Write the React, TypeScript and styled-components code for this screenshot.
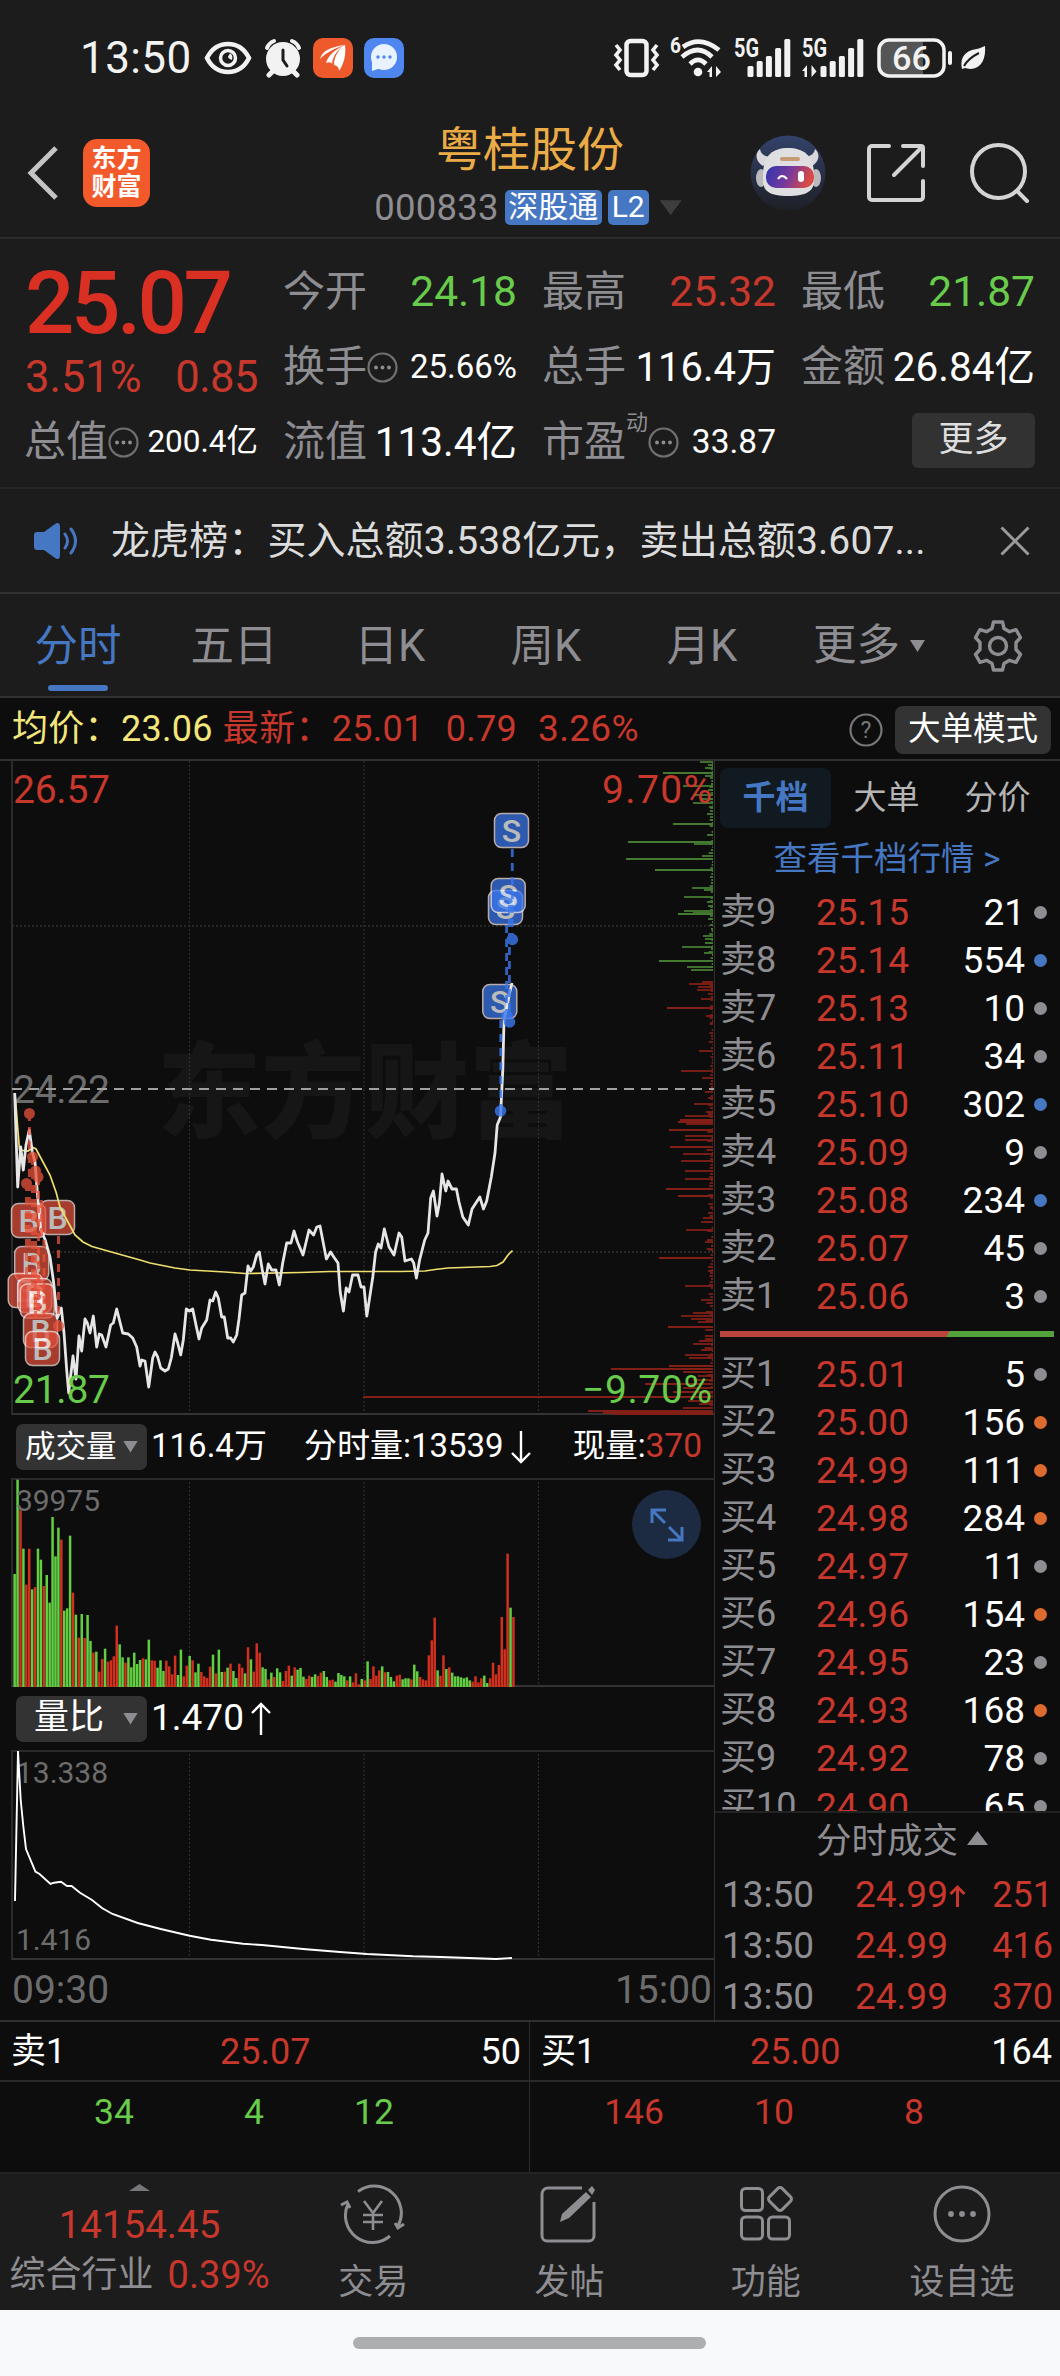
import React from 'react';
import styled, { createGlobalStyle } from 'styled-components';

const c = {
  red: '#c8372b',
  brightRed: '#d93023',
  green: '#68cb4b',
  blue: '#4677c2',
  orange: '#dd6a2e',
  grey: '#8d8d92',
  dim: '#6c6c6c',
  white: '#ffffff',
  line: '#2c2c2c',
  panel: '#1c1c1c',
  dark: '#0d0d0d',
};

const GlobalStyle = createGlobalStyle`
  * { box-sizing: border-box; }
  body {
    margin: 0;
    background: ${c.dark};
    font-family: Roboto, 'Noto Sans CJK SC', sans-serif;
    color: ${c.white};
  }
  svg { display: block; flex: none; }
`;

/* ---------- data ---------- */

// minute volume, negative = falling minute
const VOLUME = [
  -339, -622, 530, -415, 307, 415, -293, 300, -415, -382, 303, -336, -253, -510, -392, -478, 442,
  -229, -236, -454, 283, -217, 148, -219, 147, -216, -138, 103, -106, 46, 84, -115, 76, 80, 92, 184,
  -128, -89, 73, -89, -59, -103, -69, -81, 86, -83, -142, 80, 79, -58, -80, -48, 79, 62, 38, 94, -36,
  -112, 32, 64, -93, 80, -44, -70, 45, 32, 27, 61, -97, 41, -112, -45, 46, -58, 70, -48, -27, 70, 58,
  -41, 119, -83, 46, 131, 103, -59, -54, 23, -43, 30, -56, -44, 18, 48, 64, -34, 59, -52, -57, -31, 24,
  34, -30, -38, 33, 43, -48, -30, 20, 22, -16, -42, -36, -32, 20, -32, 14, 41, 8, -24, 20, -77, 24, 62,
  34, 50, -62, 44, -45, -30, -17, 34, 37, -23, -26, -26, 23, -67, -47, 30, 23, 20, 95, 140, 208, -50,
  34, 95, -54, 59, -43, -32, -32, -29, -26, -29, -20, 16, 32, 14, 26, -34, -12, 26, 73, 38, 66, 210,
  113, 400, -238, 210,
];

const PRICE_LINE =
  '14.7,1093 17.7,1187 20.7,1147 23.3,1170 26,1145 29.3,1130 32.3,1152 35,1162 37.7,1197 40.7,1230 45.3,1240 50,1257 53.3,1280 57.3,1318 61.3,1308 64,1333 66.7,1370 68.7,1393 73,1356 76,1379 79,1336 81.7,1351 85,1319 87.3,1323 90,1333 93.3,1316 96.7,1347 99.3,1334 101.7,1335 106,1347 110.7,1325 113.3,1323 116.7,1309 122.7,1333 128.3,1334 132.7,1338 136.7,1347 140,1366 141.7,1360 145,1361 148.7,1387 152.7,1358 155,1352 157.7,1357 160.7,1368 165,1371 168.3,1369 171.3,1358 175,1334 177.7,1343 180.7,1355 183.3,1340 186.3,1309 189.3,1311 192.7,1309 196,1325 199,1339 201.7,1328 206.7,1320 210,1300 212.7,1301 215.7,1292 218.3,1298 221.7,1317 224.3,1317 227.7,1338 230.7,1338 233.3,1342 236.7,1335 239,1319 241.7,1295 245,1293 248,1266 250.7,1271 253.3,1267 256.7,1255 259.3,1252 262.3,1270 265,1284 268.3,1264 271.7,1270 276,1270 279.3,1285 282.7,1263 286.7,1243 291,1243 294,1231 297.5,1242 303,1255 309,1230 313.6,1235 316.8,1227 320,1226 326.4,1259 330.6,1252 333.8,1257 338,1263 340.2,1292 343.4,1311 346.2,1288 349,1292 352.6,1275 358,1275 361,1287 364,1287 366.8,1316 372.8,1277 375.6,1252 378.3,1244 381,1248 384.3,1229 389,1247 394,1255 399,1233 401.7,1237 405,1261 411.4,1259 413.7,1263 416.4,1278 419.6,1260 424.7,1240 428,1233 430.7,1198 433.4,1191 437,1216 439.4,1203 442,1174 445.8,1191 448,1181 452,1189 456.4,1189 459,1202 462.8,1217 468.3,1225 472,1209 479.8,1197 483.5,1209 486.7,1201 491.3,1177 495,1153 497.2,1125 500.5,1117 502.8,1070 504,1020 507.3,1005 509.6,993 512,983';

const AVG_LINE =
  '15,1093 17.5,1125 19.5,1150 28,1151 33,1147.5 36,1149 50,1175 56,1192 60,1207 68,1222 75,1235 83,1242 92,1246.5 115,1253 140,1260 150,1263 175,1268 190,1270 225,1272 245,1273.5 300,1272.5 330,1271.5 400,1271.5 425,1271 435,1269.5 448,1268 490,1266.5 497,1265.5 503,1262 508,1255 512.5,1250.5';

const RATIO_LINE =
  '15,1901 18,1751 20.7,1800 23.4,1827 26,1849 35.4,1871.5 39.5,1874 50.5,1884 54,1882.7 61,1881.7 67,1886 71.6,1886 80,1892.7 92,1900 102,1908 112.5,1914 137.7,1923 160.7,1929 189.6,1935.7 211,1939.7 243,1943.7 262,1945 303,1949 340,1952 367,1954 413,1956.3 441,1957 496,1959 512,1958';

const DEPTH_GREEN = [
  [762, 13], [765, 5], [768, 8], [773, 50], [776, 8], [786, 30], [790, 5], [795, 20], [799, 12],
  [803, 20], [807, 4], [814, 6], [820, 2], [824, 40], [835, 6], [842, 85], [844, 19], [856, 11],
  [859, 87], [870, 58], [888, 21], [890, 9], [897, 29], [902, 6], [906, 5], [911, 29], [913, 20],
  [914, 35], [919, 5], [929, 2], [936, 10], [939, 8], [943, 8], [947, 31], [953, 9], [961, 54],
  [967, 26], [970, 22],
];

const DEPTH_RED = [
  [982, 11], [984, 24], [987, 15], [990, 16], [994, 5], [999, 12], [1008, 46], [1016, 7], [1023, 3],
  [1036, 2], [1051, 14], [1071, 32], [1078, 11], [1092, 8], [1098, 5], [1104, 19], [1112, 7],
  [1116, 28], [1120, 33], [1122, 35], [1124, 27], [1130, 44], [1136, 28], [1140, 28], [1147, 43],
  [1154, 30], [1161, 32], [1171, 28], [1179, 28], [1189, 47], [1196, 35], [1208, 3], [1218, 10],
  [1222, 12], [1230, 27], [1242, 8], [1250, 4], [1258, 54], [1267, 5], [1271, 5], [1286, 28],
  [1300, 12], [1313, 20], [1316, 32], [1319, 22], [1322, 15], [1327, 45], [1336, 8], [1341, 14],
  [1344, 20], [1350, 12], [1355, 28], [1358, 24], [1366, 44], [1369, 102], [1372, 30], [1376, 15],
  [1380, 20], [1384, 68], [1388, 30], [1392, 40], [1397, 350], [1401, 25], [1404, 14], [1408, 30],
  [1411, 125], [1413, 110], [1415, 100],
];

// small levels between the big ones
const NOISE = Array.from({ length: 215 }, (_, i) => {
  const y = 763 + i * 3;
  const grow = y > 1380 ? 9 : y > 1300 ? 5 : y > 1100 ? 3 : 1;
  return [y, ((i * 37) % 11) / 3 + ((i * 7) % 3 === 0 ? grow : 0)];
}).filter(([y]) => y < 972 || y > 981);

const BUY_TAGS = [
  [11.5, 1203.5], [14.7, 1246.5], [8.3, 1273.5], [17.7, 1278.5], [20.3, 1284], [23.5, 1313.5],
  [25.5, 1331.5], [40.5, 1200.5],
];
const SELL_TAGS = [[494.5, 813.5], [488.5, 890.5], [491.2, 878.5], [482.8, 984.5]];
const BUY_DOTS = [[29.4, 1113.5], [32.5, 1157], [35.5, 1171], [38, 1177], [26.5, 1183.5], [58.5, 1326]];
const SELL_DOTS = [[512.3, 939.5], [507, 1016], [509.5, 1022], [500.5, 1111]];
const BUY_DASHES = [
  [29.4, 1113, 1250], [32.5, 1157, 1285], [35.5, 1171, 1320], [38.5, 1177, 1318], [26.5, 1183, 1275],
  [41.5, 1200, 1240], [44, 1240, 1315], [58.5, 1236, 1326],
];
const SELL_DASHES = [[512.3, 849, 939], [506.6, 925, 1016], [509.4, 905, 1022], [500.8, 1020, 1111]];

type Level = [string, string, number, string];
const ASKS: Level[] = [
  ['卖9', '25.15', 21, c.grey],
  ['卖8', '25.14', 554, c.blue],
  ['卖7', '25.13', 10, c.grey],
  ['卖6', '25.11', 34, c.grey],
  ['卖5', '25.10', 302, c.blue],
  ['卖4', '25.09', 9, c.grey],
  ['卖3', '25.08', 234, c.blue],
  ['卖2', '25.07', 45, c.grey],
  ['卖1', '25.06', 3, c.grey],
];
const BIDS: Level[] = [
  ['买1', '25.01', 5, c.grey],
  ['买2', '25.00', 156, c.orange],
  ['买3', '24.99', 111, c.orange],
  ['买4', '24.98', 284, c.orange],
  ['买5', '24.97', 11, c.grey],
  ['买6', '24.96', 154, c.orange],
  ['买7', '24.95', 23, c.grey],
  ['买8', '24.93', 168, c.orange],
  ['买9', '24.92', 78, c.grey],
  ['买10', '24.90', 65, c.grey],
];

/* ---------- shared parts ---------- */

const Page = styled.div`
  width: 1060px;
  height: 2376px;
  overflow: hidden;
  display: flex;
  flex-direction: column;
`;

const Text = styled.span<{ $size: number; $color?: string; $weight?: number; $ls?: number }>`
  font-size: ${(p) => p.$size}px;
  line-height: 1.1;
  color: ${(p) => p.$color || c.white};
  font-weight: ${(p) => p.$weight || 400};
  letter-spacing: ${(p) => p.$ls || 0}px;
  white-space: nowrap;
`;

const Triangle = styled.i<{ $w: number; $h: number; $color: string; $up?: boolean }>`
  flex: none;
  width: ${(p) => p.$w}px;
  height: ${(p) => p.$h}px;
  background: ${(p) => p.$color};
  clip-path: ${(p) => (p.$up ? 'polygon(50% 0, 100% 100%, 0 100%)' : 'polygon(0 0, 100% 0, 50% 100%)')};
`;

/* ---------- status bar ---------- */

const StatusBar = styled.div`
  height: 115px;
  flex: none;
  background: ${c.panel};
  display: flex;
  justify-content: space-between;
  padding: 36px 74px 0 80px;
`;

const StatusGroup = styled.div<{ $gap: number }>`
  height: 44px;
  display: flex;
  align-items: center;
  gap: ${(p) => p.$gap}px;
`;

const AppTile = styled.div<{ $bg: string }>`
  width: 40px;
  height: 40px;
  border-radius: 10px;
  background: ${(p) => p.$bg};
  display: flex;
  align-items: center;
  justify-content: center;
`;

const Signal: React.FC<{ data?: boolean }> = ({ data }) => (
  <svg width={data ? 62 : 58} height="40" viewBox={data ? '0 0 62 40' : '0 0 58 40'} fill="#f2f2f2">
    <text x="0" y="19" fontSize="25" fontWeight="700" textLength="25" lengthAdjust="spacingAndGlyphs">
      5G
    </text>
    {[11, 16, 21, 29, 38].map((h, i) => (
      <rect key={h} x={(data ? 18.5 : 13.5) + i * 9.2} y={39 - h} width="6" height={h} rx="1.5" />
    ))}
    {data && <path d="M0 33l5-6v12H2.500v-6zM9.500 27l5 6.500-5 5.500z" />}
  </svg>
);

const StatusLine = () => (
  <StatusBar>
    <StatusGroup $gap={11}>
      <Text $size={44} $color="#f2f2f2" $ls={0.4}>13:50</Text>
      <svg width="50" height="36" viewBox="0 0 50 36" fill="none" stroke="#f2f2f2">
        <path d="M4 18C9 8 17 4 25 4S41 8 46 18C41 28 33 32 25 32S9 28 4 18z" strokeWidth="4.500" />
        <circle cx="25" cy="18" r="7.500" strokeWidth="3.500" />
        <path d="M26 15a3 3 0 0 1 1 4" strokeWidth="4" />
      </svg>
      <svg width="38" height="40" viewBox="0 0 38 40">
        <circle cx="19" cy="21" r="17" fill="#f2f2f2" />
        <path d="M3 10A12 12 0 0 1 10 3M28 3a12 12 0 0 1 7 7" stroke="#f2f2f2" strokeWidth="4" fill="none" strokeLinecap="round" />
        <path d="M8 34l-3 3M30 34l3 3" stroke="#f2f2f2" strokeWidth="5" strokeLinecap="round" />
        <path d="M19 12v10l4 6" stroke={c.panel} strokeWidth="3" fill="none" strokeLinecap="round" />
      </svg>
      <AppTile $bg="#ee5a2b">
        <svg width="28" height="28" viewBox="0 0 28 28" fill="#fff">
          <path d="M1 15C3 7 11 3 26 1 14 5 7 9 1 15zM7 19C9 12 15 6 26 1c-7 5-12 10-13 19 0-1-2-3-6-1zM15 21C15 13 19 6 26 1c1 8 0 17-6 26 0-3-1-5-5-6z" />
        </svg>
      </AppTile>
      <AppTile $bg="#4f86f0">
        <svg width="32" height="30" viewBox="0 0 32 30">
          <circle cx="16" cy="14" r="13" fill="#e9f2ff" />
          <path d="M4 18l0 10 9-3z" fill="#e9f2ff" />
          <circle cx="10" cy="14" r="1.700" fill="#4f86f0" />
          <circle cx="16" cy="14" r="1.700" fill="#4f86f0" />
          <circle cx="22" cy="14" r="1.700" fill="#4f86f0" />
        </svg>
      </AppTile>
    </StatusGroup>
    <StatusGroup $gap={10}>
      <svg width="47" height="40" viewBox="0 0 47 40" fill="none" stroke="#f2f2f2">
        <rect x="13.500" y="3" width="20" height="34" rx="4" strokeWidth="4.500" />
        <path d="M3 7l4 5-4 5 4 5-4 5 4 5M44 7l-4 5 4 5-4 5 4 5-4 5" strokeWidth="3.600" />
      </svg>
      <svg width="54" height="44" viewBox="0 -2 54 44" fill="none" stroke="#f2f2f2" strokeWidth="4.600">
        <text x="0" y="15" fontSize="22" fontWeight="700" fill="#f2f2f2" stroke="none" textLength="11" lengthAdjust="spacingAndGlyphs">
          6
        </text>
        <path d="M13 9Q30 -3 49 12M12 19Q28 5 42 19M20 26Q28 18 36 26" />
        <circle cx="28" cy="34" r="4.300" fill="#f2f2f2" stroke="none" />
        <path d="M37 34l5-6v11h-2.500v-5zM46 28l5 6-5 5z" fill="#f2f2f2" stroke="none" />
      </svg>
      <Signal />
      <Signal data />
      <svg width="78" height="40" viewBox="0 0 78 40">
        <path d="M14 2H49V38H14a8 8 0 0 1-8-8V10a8 8 0 0 1 8-8z" fill="#555" />
        <rect x="5" y="2" width="65" height="36" rx="10" fill="none" stroke="#f2f2f2" strokeWidth="3.500" />
        <text x="18" y="32" fontSize="34" fontWeight="500" fill="#f2f2f2" textLength="39" lengthAdjust="spacingAndGlyphs">
          66
        </text>
        <rect x="74" y="13" width="4" height="14" rx="2" fill="#f2f2f2" />
      </svg>
      <svg width="26" height="26" viewBox="0 0 26 26" style={{ marginLeft: -2 }}>
        <path d="M25 1c1 12-3 22-14 23-3 0-5-1-6-1l-3 1C0 15 3 8 12 5 17 4 21 3 25 1z" fill="#f2f2f2" />
        <path d="M4 21C8 14 13 11 19 8" stroke={c.panel} strokeWidth="2" fill="none" />
      </svg>
    </StatusGroup>
  </StatusBar>
);

/* ---------- title bar ---------- */

const TitleBar = styled.div`
  height: 124px;
  flex: none;
  background: ${c.panel};
  border-bottom: 2px solid ${c.line};
  display: grid;
  grid-template-columns: 330px 1fr 330px;
`;

const TitleSide = styled.div<{ $right?: boolean }>`
  display: flex;
  align-items: center;
  justify-content: ${(p) => (p.$right ? 'flex-end' : 'flex-start')};
  padding: ${(p) => (p.$right ? '0 30px 7px 0' : '0 0 7px 27px')};
`;

const BrandTile = styled.div`
  width: 67px;
  height: 68px;
  margin-left: 25px;
  border-radius: 14px;
  background: #f2592b;
  display: flex;
  flex-direction: column;
  align-items: center;
  justify-content: center;
  font-size: 25px;
  font-weight: 700;
  line-height: 28px;
`;

const TitleCenter = styled.div`
  display: flex;
  flex-direction: column;
  align-items: center;
  padding-top: 9px;
`;

const CodeRow = styled.div`
  display: flex;
  align-items: center;
  height: 36px;
  margin-top: 14px;
  margin-left: -4px;
`;

const Badge = styled.span<{ $w: number }>`
  width: ${(p) => p.$w}px;
  height: 35px;
  margin-left: 6px;
  border-radius: 5px;
  background: ${c.blue};
  font-size: 30px;
  line-height: 34px;
  text-align: center;
  white-space: nowrap;
`;

const Header = () => (
  <TitleBar>
    <TitleSide>
      <svg width="31" height="54" viewBox="0 0 31 54" fill="none" stroke="#c4c4c4" strokeWidth="5">
        <path d="M29 2L4 27l25 25" />
      </svg>
      <BrandTile>
        <span>东方</span>
        <span>财富</span>
      </BrandTile>
    </TitleSide>
    <TitleCenter>
      <Text $size={47} $color="#ebac48">粤桂股份</Text>
      <CodeRow>
        <Text $size={36.5} $color={c.grey} $ls={0.2}>000833</Text>
        <Badge $w={97}>深股通</Badge>
        <Badge $w={41}>L2</Badge>
        <Triangle $w={22} $h={15} $color="#3d3d3d" style={{ marginLeft: 11 }} />
      </CodeRow>
    </TitleCenter>
    <TitleSide $right>
      <svg width="76" height="76" viewBox="0 0 76 76">
        <defs>
          <linearGradient id="disc" x1="0" y1="0" x2="0" y2="1">
            <stop offset="0" stopColor="#33426a" />
            <stop offset="1" stopColor="#1e2026" />
          </linearGradient>
          <linearGradient id="visor" x1="0" y1="0" x2="1" y2="0.200">
            <stop offset="0" stopColor="#2f35b0" />
            <stop offset="0.550" stopColor="#7a3a9a" />
            <stop offset="1" stopColor="#dc4a45" />
          </linearGradient>
        </defs>
        <circle cx="38" cy="38" r="37.500" fill="url(#disc)" />
        <path d="M10 14c-5 4-5 12 3 17l10-9c-7 0-12-2-13-8zM65 14c5 4 5 12-3 17l-10-9c7 0 12-2 13-8z" fill="#d8d8dc" />
        <ellipse cx="11" cy="43" rx="5" ry="9" fill="#b9b9be" />
        <ellipse cx="66" cy="43" rx="5" ry="9" fill="#b9b9be" />
        <path d="M13 38C14 20 23 13 38 13s25 7 26 25v8c0 10-8 15-26 15s-25-5-25-15z" fill="#dfdfe2" />
        <rect x="16" y="31" width="48" height="22" rx="10" fill="url(#visor)" />
        <rect x="30" y="22" width="20" height="4" rx="2" fill="#c79a73" />
        <path d="M28 44q4-6 9 0" stroke="#fff" strokeWidth="2.200" fill="none" />
        <rect x="48" y="36" width="6" height="11" rx="3" fill="#fff" />
      </svg>
      <svg width="58" height="58" viewBox="0 0 58 58" fill="none" stroke="#d4d4d4" strokeWidth="4" strokeLinecap="round" style={{ marginLeft: 41 }}>
        <path d="M22 2H5a3 3 0 0 0-3 3v48a3 3 0 0 0 3 3h48a3 3 0 0 0 3-3V37M36 2h18a2 2 0 0 1 2 2v18M54 4L27 31" />
      </svg>
      <svg width="60" height="60" viewBox="0 0 60 60" fill="none" stroke="#d4d4d4" strokeWidth="4" strokeLinecap="round" style={{ marginLeft: 45 }}>
        <circle cx="28.500" cy="28.500" r="26.500" />
        <path d="M47 48l10 10" />
      </svg>
    </TitleSide>
  </TitleBar>
);

/* ---------- quote stats ---------- */

const Stats = styled.div`
  height: 250px;
  flex: none;
  background: ${c.panel};
  border-bottom: 2px solid #242424;
  display: grid;
  grid-template-columns: repeat(4, 233px);
  grid-template-rows: repeat(3, 75px);
  column-gap: 26px;
  padding: 16px 0 0 25px;
`;

const PriceBlock = styled.div`
  grid-row: span 2;
  display: flex;
  flex-direction: column;
`;

const Spread = styled.div`
  display: flex;
  align-items: center;
  justify-content: space-between;
`;

const Cell = styled(Spread)`
  position: relative;
`;

const LabelGroup = styled.div`
  display: flex;
  align-items: center;
`;

const Sup = styled.span`
  font-size: 22px;
  line-height: 24px;
  color: ${c.grey};
  align-self: flex-start;
  margin-top: -8px;
`;

const MoreButton = styled.div`
  width: 123px;
  height: 55px;
  margin: -5px 0 0 auto;
  border-radius: 6px;
  background: #323232;
  color: #dedede;
  font-size: 35px;
  line-height: 53px;
  text-align: center;
`;

const InfoDots = () => (
  <svg width="31" height="31" viewBox="0 0 31 31">
    <circle cx="15.500" cy="15.500" r="14" fill="none" stroke="#707074" strokeWidth="2.200" />
    <circle cx="9" cy="15.500" r="1.900" fill="#8d8d92" />
    <circle cx="15.500" cy="15.500" r="1.900" fill="#8d8d92" />
    <circle cx="22" cy="15.500" r="1.900" fill="#8d8d92" />
  </svg>
);

interface StatProps {
  label: string;
  value: string;
  size?: number;
  color?: string;
  dots?: boolean;
  sup?: string;
}

const Stat: React.FC<StatProps> = ({ label, value, size = 42.5, color, dots, sup }) => (
  <Cell>
    <LabelGroup>
      <Text $size={42} $color={c.grey} style={{ marginLeft: -1 }}>{label}</Text>
      {sup && <Sup>{sup}</Sup>}
      {dots && <InfoDots />}
    </LabelGroup>
    <Text $size={size} $color={color}>{value}</Text>
  </Cell>
);

const Quote = () => (
  <Stats>
    <PriceBlock>
      <Text $size={87} $color={c.brightRed} $weight={500} $ls={-3.5} style={{ marginTop: 1 }}>25.07</Text>
      <Spread style={{ marginTop: 2 }}>
        <Text $size={43.5} $color={c.red}>3.51%</Text>
        <Text $size={43.5} $color={c.red} $ls={-0.5}>0.85</Text>
      </Spread>
    </PriceBlock>
    <Stat label="今开" value="24.18" color={c.green} />
    <Stat label="最高" value="25.32" color={c.red} />
    <Stat label="最低" value="21.87" color={c.green} />
    <Stat label="换手" value="25.66%" size={33} dots />
    <Stat label="总手" value="116.4万" size={40} />
    <Stat label="金额" value="26.84亿" size={40.5} />
    <Stat label="总值" value="200.4亿" size={31.5} dots />
    <Stat label="流值" value="113.4亿" size={40.5} />
    <Stat label="市盈" value="33.87" size={33.5} dots sup="动" />
    <Cell>
      <MoreButton>更多</MoreButton>
    </Cell>
  </Stats>
);

/* ---------- notice + period tabs ---------- */

const Notice = styled.div`
  height: 105px;
  flex: none;
  background: ${c.panel};
  border-bottom: 2px solid #303030;
  display: flex;
  align-items: center;
  padding: 0 30px 0 33px;
`;

const NoticeText = styled(Text)`
  flex: 1;
  margin-left: 32px;
  padding-top: 2px;
`;

const Tabs = styled.div`
  height: 104px;
  flex: none;
  background: ${c.panel};
  border-bottom: 2px solid #303030;
  display: flex;
`;

const Tab = styled.div<{ $active?: boolean }>`
  width: 156px;
  padding-top: 29px;
  display: flex;
  flex-direction: column;
  align-items: center;
  gap: 14px;
  font-size: 43.5px;
  line-height: 48px;
  color: ${(p) => (p.$active ? c.blue : c.grey)};
  &::after {
    content: '';
    width: 60px;
    height: 6px;
    border-radius: 3px;
    background: ${(p) => (p.$active ? c.blue : 'transparent')};
  }
`;

const MoreTab = styled.div`
  margin-left: 33px;
  width: 159px;
  height: 104px;
  display: flex;
  align-items: center;
  gap: 10px;
`;

const GearWrap = styled.div`
  height: 104px;
  display: flex;
  align-items: center;
`;

/* ---------- info bar ---------- */

const InfoBar = styled.div`
  height: 63px;
  flex: none;
  border-bottom: 2px solid #303030;
  display: flex;
  align-items: center;
  padding: 2px 9px 0 12px;
`;

const ModeButton = styled.div`
  width: 156px;
  height: 48px;
  margin-left: 12px;
  border-radius: 8px;
  background: #333;
  font-size: 32.5px;
  line-height: 47px;
  text-align: center;
`;

/* ---------- charts ---------- */

const Main = styled.div`
  height: 1261px;
  flex: none;
  display: grid;
  grid-template-columns: 715px 1fr;
  border-bottom: 2px solid #303030;
`;

const ChartColumn = styled.div`
  border-right: 1px solid #303030;
  display: flex;
  flex-direction: column;
`;

const ChartHead = styled.div`
  height: 63px;
  flex: none;
  display: flex;
  align-items: center;
  padding-left: 16px;
`;

const Picker = styled.div<{ $size: number }>`
  width: 131px;
  height: 46px;
  margin-right: 4px;
  border-radius: 7px;
  background: #333;
  display: flex;
  align-items: center;
  justify-content: space-between;
  padding: 0 9px 0 ${(p) => (p.$size > 32 ? 18 : 9)}px;
  font-size: ${(p) => p.$size}px;
  line-height: 1.1;
`;

const Overlay = styled.div`
  position: relative;
`;

const ExpandButton = styled.div`
  position: absolute;
  left: 632px;
  top: 12px;
  width: 69px;
  height: 69px;
  border-radius: 50%;
  background: #1c2a42;
  display: flex;
  align-items: center;
  justify-content: center;
`;

const Axis = styled(Spread)`
  height: 61px;
  padding: 0 2px 0 12px;
`;

const Grid: React.FC<{ top: number; bottom: number }> = ({ top, bottom }) => (
  <g fill="none">
    {[189.5, 364, 538.5].map((x) => (
      <path key={x} d={`M${x} ${top}V${bottom}`} stroke="#303030" strokeWidth="1.200" strokeDasharray="2 2" />
    ))}
    <path d={`M12 ${top}V${bottom}`} stroke="#2a2a2a" strokeWidth="2" />
    <path d={`M12 ${bottom - 1}H714`} stroke="#333" strokeWidth="2" />
  </g>
);

interface TagProps {
  x: number;
  y: number;
  letter: string;
  fill: string;
}

const Tag: React.FC<TagProps> = ({ x, y, letter, fill }) => (
  <g opacity="0.72">
    <rect x={x} y={y} width="34" height="34" rx="7" fill={fill} stroke="#ffe9e4" strokeWidth="1.500" />
    <text x={x + 17} y={y + 28.5} fontSize="32" fontWeight="500" textAnchor="middle" fill="#fff">
      {letter}
    </text>
  </g>
);

const PriceChart = () => (
  <svg width="714" height="654" viewBox="0 761 714 654">
    <text x="157" y="1130" fontSize="104" fontWeight="900" fill="#161616" textLength="416">
      东方财富
    </text>
    <Grid top={761} bottom={1415} />
    <path d="M12 926H714M12 1252H714" stroke="#303030" strokeWidth="1.300" strokeDasharray="2 2" />
    <g stroke="#447b31" strokeWidth="1.800">
      {DEPTH_GREEN.map(([y, w]) => <path key={y} d={`M713 ${y}h${-w}`} />)}
    </g>
    <g stroke="#821f17" strokeWidth="1.800">
      {DEPTH_RED.map(([y, w]) => <path key={y} d={`M713 ${y}h${-w}`} />)}
    </g>
    {NOISE.map(([y, w]) => (
      <path key={y} d={`M713 ${y}h${-w}`} stroke={y < 975 ? '#447b31' : '#821f17'} strokeWidth="1.800" />
    ))}
    <g fontSize="39">
      <text x="13" y="1103" fill={c.dim} textLength="97">24.22</text>
      <text x="13" y="803" fill={c.red} textLength="97">26.57</text>
      <text x="602" y="803" fill={c.red} textLength="110">9.70%</text>
    </g>
    <path d="M12 1089H714" stroke="#a0a0a0" strokeWidth="2" strokeDasharray="10 7" />
    {BUY_TAGS.map(([x, y]) => <Tag key={y} x={x} y={y} letter="B" fill="#e04f3c" />)}
    {SELL_TAGS.map(([x, y]) => <Tag key={y} x={x} y={y} letter="S" fill="#3a78ee" />)}
    <polyline points={AVG_LINE} fill="none" stroke="#eedf6e" strokeWidth="1.700" />
    <polyline points={PRICE_LINE} fill="none" stroke="#e6e6e6" strokeWidth="2.800" strokeLinejoin="round" />
    <g fill="#ea523a" stroke="#ea523a" opacity="0.750">
      {BUY_DASHES.map(([x, a, b]) => (
        <path key={x} d={`M${x} ${a}V${b}`} strokeWidth="3" strokeDasharray="8 6" />
      ))}
      {BUY_DOTS.map(([x, y]) => <circle key={x} cx={x} cy={y} r="5.500" stroke="none" />)}
    </g>
    <g fill="#3a78ee" stroke="#3a78ee" opacity="0.800">
      {SELL_DASHES.map(([x, a, b]) => (
        <path key={x} d={`M${x} ${a}V${b}`} strokeWidth="2.800" strokeDasharray="8 6" />
      ))}
      {SELL_DOTS.map(([x, y]) => <circle key={x} cx={x} cy={y} r="5.800" stroke="none" />)}
    </g>
    <g fontSize="39" fill={c.green}>
      <text x="13" y="1403" textLength="97">21.87</text>
      <text x="582" y="1403" textLength="130">−9.70%</text>
    </g>
  </svg>
);

const VolumeChart = () => (
  <svg width="714" height="209" viewBox="0 1478 714 209">
    <Grid top={1478} bottom={1687} />
    <path d="M12 1479H714" stroke="#2a2a2a" strokeWidth="2" />
    {VOLUME.map((v, i) => (
      <rect
        key={i}
        x={13.4 + i * 2.917}
        y={1687 - Math.abs(v) / 3}
        width="2.500"
        height={Math.abs(v) / 3}
        fill={v < 0 ? '#62cf43' : '#d2301f'}
      />
    ))}
    <text x="16" y="1510.500" fontSize="30" fill={c.dim} textLength="84">39975</text>
  </svg>
);

const RatioChart = () => (
  <svg width="714" height="210" viewBox="0 1750 714 210">
    <Grid top={1750} bottom={1960} />
    <path d="M12 1751H714" stroke="#2a2a2a" strokeWidth="2" />
    <g fontSize="30" fill={c.dim}>
      <text x="16" y="1782.500" textLength="92">13.338</text>
      <text x="16" y="1950" textLength="75">1.416</text>
    </g>
    <polyline points={RATIO_LINE} fill="none" stroke="#fff" strokeWidth="1.900" />
  </svg>
);

const Arrow: React.FC<{ up?: boolean }> = ({ up }) => (
  <svg width="20" height="34" viewBox="0 0 20 34" fill="none" stroke="#fff" strokeWidth="2.400" style={{ marginLeft: 7 }}>
    <path d={up ? 'M10 33V2M1 11l9-9 9 9' : 'M10 1v31M1 23l9 9 9-9'} />
  </svg>
);

const Charts = () => (
  <ChartColumn>
    <PriceChart />
    <ChartHead>
      <Picker $size={30.5}>
        成交量
        <Triangle $w={15} $h={12} $color="#8d8d92" />
      </Picker>
      <Text $size={33}>116.4万</Text>
      <Text $size={33} style={{ marginLeft: 37 }}>分时量:13539</Text>
      <Arrow />
      <Text $size={32.5} style={{ marginLeft: 42 }}>现量:</Text>
      <Text $size={33.5} $color={c.red}>370</Text>
    </ChartHead>
    <Overlay>
      <VolumeChart />
      <ExpandButton>
        <svg width="34" height="34" viewBox="0 0 34 34" fill="none" stroke="#4677c2" strokeWidth="3">
          <path d="M2 15V2h14M2 2l13 13M32 19v13H18M32 32L19 19" />
        </svg>
      </ExpandButton>
    </Overlay>
    <ChartHead>
      <Picker $size={35}>
        量比
        <Triangle $w={15} $h={12} $color="#8d8d92" />
      </Picker>
      <Text $size={37}>1.470</Text>
      <Arrow up />
    </ChartHead>
    <RatioChart />
    <Axis>
      <Text $size={39} $color={c.dim}>09:30</Text>
      <Text $size={39} $color={c.dim}>15:00</Text>
    </Axis>
  </ChartColumn>
);

/* ---------- order book ---------- */

const BookColumn = styled.div`
  display: flex;
  flex-direction: column;
  padding: 7px 6px 0 5px;
`;

const BookTabs = styled.div`
  display: grid;
  grid-template-columns: repeat(3, 111px);
  flex: none;
`;

const BookTab = styled.div<{ $active?: boolean }>`
  height: 60px;
  border-radius: 8px;
  background: ${(p) => (p.$active ? '#111921' : 'transparent')};
  color: ${(p) => (p.$active ? c.blue : '#b4b4b4')};
  font-size: 33px;
  font-weight: ${(p) => (p.$active ? 700 : 400)};
  line-height: 60px;
  text-align: center;
`;

const BookLink = styled.div`
  height: 61px;
  flex: none;
  font-size: 33.5px;
  line-height: 61px;
  color: ${c.blue};
  text-align: center;
`;

const BookList = styled.div<{ $h: number }>`
  height: ${(p) => p.$h}px;
  flex: none;
  overflow: hidden;
`;

const BookRow = styled.div`
  height: 48px;
  display: grid;
  grid-template-columns: 96px 100px 109px 1fr;
  align-items: center;
`;

const Qty = styled(Text)`
  text-align: right;
`;

const Dot = styled.i<{ $color: string }>`
  width: 13px;
  height: 13px;
  margin: -2px 0 0 9px;
  border-radius: 50%;
  background: ${(p) => p.$color};
`;

const Balance = styled.div`
  height: 6px;
  margin: 10px 0 14px;
  flex: none;
  background: linear-gradient(125deg, #b8443c 68%, #54a23c 68%);
`;

const DealHead = styled.div`
  height: 59px;
  flex: none;
  margin: 0 -6px 0 -5px;
  border-top: 2px solid #222;
  display: flex;
  align-items: center;
  justify-content: center;
  gap: 9px;
  padding-left: 29px;
`;

const DealRow = styled.div`
  height: 51px;
  flex: none;
  display: grid;
  grid-template-columns: 133px 94px 24px 1fr;
  align-items: center;
  padding: 0 1px 0 2px;
`;

const Rows: React.FC<{ levels: Level[] }> = ({ levels }) => (
  <>
    {levels.map(([name, price, qty, dot]) => (
      <BookRow key={name}>
        <Text $size={36} $color={c.grey}>{name}</Text>
        <Text $size={37} $color={c.red}>{price}</Text>
        <Qty $size={37}>{qty}</Qty>
        <Dot $color={dot} />
      </BookRow>
    ))}
  </>
);

const Book = () => (
  <BookColumn>
    <BookTabs>
      <BookTab $active>千档</BookTab>
      <BookTab>大单</BookTab>
      <BookTab>分价</BookTab>
    </BookTabs>
    <BookLink>查看千档行情 &gt;</BookLink>
    <BookList $h={432}>
      <Rows levels={ASKS} />
    </BookList>
    <Balance />
    <BookList $h={460}>
      <Rows levels={BIDS} />
    </BookList>
    <DealHead>
      <Text $size={35.500} $color={c.grey}>分时成交</Text>
      <Triangle $w={21} $h={14} $color="#8d8d92" $up style={{ marginTop: -7 }} />
    </DealHead>
    {['251', '416', '370'].map((qty, i) => (
      <DealRow key={qty}>
        <Text $size={37} $color={c.grey}>13:50</Text>
        <Text $size={37} $color={c.red}>24.99</Text>
        {i === 0 ? (
          <svg width="17" height="24" viewBox="0 0 17 24" fill="none" stroke={c.red} strokeWidth="3">
            <path d="M8.500 23V3M1.500 10l7-7 7 7" />
          </svg>
        ) : (
          <span />
        )}
        <Qty $size={36} $color={c.red}>{qty}</Qty>
      </DealRow>
    ))}
  </BookColumn>
);

/* ---------- level-2 queue ---------- */

const Queue = styled.div`
  height: 152px;
  flex: none;
  display: grid;
  grid-template-columns: 529px 531px;
  border-bottom: 2px solid #242424;
`;

const QueueSide = styled.div`
  & + & {
    border-left: 1px solid #2a2a2a;
  }
`;

const QueueHead = styled.div`
  height: 60px;
  border-bottom: 2px solid #2a2a2a;
  display: grid;
  grid-template-columns: 209px 1fr auto;
  align-items: center;
  padding: 3px 8px 0 11px;
`;

const QueueList = styled.div`
  height: 60px;
  display: grid;
  grid-template-columns: repeat(3, 130px);
  align-items: center;
  padding: 2px 0 0 4px;
`;

interface QueueProps {
  name: string;
  price: string;
  total: string;
  orders: string[];
  color: string;
}

const QueuePane: React.FC<QueueProps> = ({ name, price, total, orders, color }) => (
  <QueueSide>
    <QueueHead>
      <Text $size={35}>{name}</Text>
      <Text $size={36} $color={c.red}>{price}</Text>
      <Text $size={36}>{total}</Text>
    </QueueHead>
    <QueueList>
      {orders.map((o) => (
        <Qty key={o} $size={35.5} $color={color}>{o}</Qty>
      ))}
    </QueueList>
  </QueueSide>
);

/* ---------- bottom bar ---------- */

const BottomBar = styled.div`
  height: 136px;
  flex: none;
  background: ${c.panel};
  display: grid;
  grid-template-columns: 275px repeat(4, 196.3px);
`;

const IndexBlock = styled.div`
  display: flex;
  flex-direction: column;
  align-items: center;
  padding: 10px 0 0 4px;
`;

const IndexRow = styled.div`
  display: flex;
  gap: 14px;
  align-items: center;
  margin-top: 9px;
`;

const NavItem = styled.div`
  display: flex;
  flex-direction: column;
  align-items: center;
  gap: 19px;
  padding-top: 10px;
  font-size: 35px;
  line-height: 40px;
  color: ${c.grey};
`;

const HomeArea = styled.div`
  flex: 1;
  background: #f8f9fb;
  display: flex;
  justify-content: center;
  padding: 27px 1px 0 0;
`;

const HomeBar = styled.div`
  width: 353px;
  height: 12px;
  border-radius: 6px;
  background: #adaeb0;
`;

const NavIcon: React.FC<{ children: React.ReactNode }> = ({ children }) => (
  <svg width="66" height="60" viewBox="0 0 66 60" fill="none" stroke={c.grey} strokeWidth="3">
    {children}
  </svg>
);

const App: React.FC = () => (
  <Page>
    <GlobalStyle />
    <StatusLine />
    <Header />
    <Quote />
    <Notice>
      <svg width="46" height="38" viewBox="0 0 46 38">
        <path d="M1 13a3 3 0 0 1 3-3h7L22 2q5-3 5 3v28q0 6-5 3l-11-8H4a3 3 0 0 1-3-3z" fill={c.blue} />
        <path d="M32 12q5 7 0 14M38 7q9 12 0 24" stroke={c.blue} strokeWidth="3" fill="none" strokeLinecap="round" />
      </svg>
      <NoticeText $size={39} $ls={0.1} $color="#dcdcdc">龙虎榜：买入总额3.538亿元，卖出总额3.607...</NoticeText>
      <svg width="30" height="30" viewBox="0 0 30 30" stroke="#9a9a9a" strokeWidth="3">
        <path d="M1.500 1.500l27 27M28.500 1.500l-27 27" />
      </svg>
    </Notice>
    <Tabs>
      <Tab $active>分时</Tab>
      <Tab>五日</Tab>
      <Tab>日K</Tab>
      <Tab>周K</Tab>
      <Tab>月K</Tab>
      <MoreTab>
        <Text $size={43.5} $color={c.grey}>更多</Text>
        <Triangle $w={15} $h={12} $color="#8d8d92" />
      </MoreTab>
      <GearWrap>
        <svg width="52" height="52" viewBox="0 0 52 52" fill="none" stroke={c.grey} strokeWidth="3.400" strokeLinejoin="round">
          <path d="M21.500 2h9l1.500 6.500 5.500 3.200 6.500-2L48.500 17.500 44 22.500v7l4.500 5-4.500 7.800-6.500-2-5.500 3.200L30.500 50h-9L20 43.500l-5.500-3.200-6.500 2L3.500 34.500l4.500-5v-7l-4.500-5L8 9.700l6.500 2L20 8.500z" />
          <circle cx="26" cy="26" r="8.500" />
        </svg>
      </GearWrap>
    </Tabs>
    <InfoBar>
      <Text $size={36} $ls={0.3} $color="#f3e77c">均价：23.06</Text>
      <Text $size={36} $ls={0.3} $color={c.red} style={{ marginLeft: 10 }}>最新：25.01</Text>
      <Text $size={36} $ls={0.3} $color={c.red} style={{ marginLeft: 22 }}>0.79</Text>
      <Text $size={37} $ls={0.3} $color={c.red} style={{ marginLeft: 21 }}>3.26%</Text>
      <svg width="34" height="34" viewBox="0 0 34 34" style={{ marginLeft: 'auto' }}>
        <circle cx="17" cy="17" r="15.500" fill="none" stroke="#77777b" strokeWidth="2.200" />
        <text x="17" y="25" fontSize="23" textAnchor="middle" fill="#77777b">?</text>
      </svg>
      <ModeButton>大单模式</ModeButton>
    </InfoBar>
    <Main>
      <Charts />
      <Book />
    </Main>
    <Queue>
      <QueuePane name="卖1" price="25.07" total="50" orders={['34', '4', '12']} color={c.green} />
      <QueuePane name="买1" price="25.00" total="164" orders={['146', '10', '8']} color={c.red} />
    </Queue>
    <BottomBar>
      <IndexBlock>
        <Triangle $w={21} $h={7} $color="#77777b" $up />
        <Text $size={38.5} $color={c.red} style={{ marginTop: 13 }}>14154.45</Text>
        <IndexRow>
          <Text $size={36} $color={c.grey}>综合行业</Text>
          <Text $size={38} $color={c.red}>0.39%</Text>
        </IndexRow>
      </IndexBlock>
      <NavItem>
        <NavIcon>
          <path d="M18 7.500A27 27 0 0 1 58 42M50 52A27 27 0 0 1 8 20M1 21l6-3 3 6M64 40l-6 4-3-5" />
          <path d="M24 17l9 12 9-12M33 29v17M23 31h20M23 38h20" strokeWidth="2.600" />
        </NavIcon>
        交易
      </NavItem>
      <NavItem>
        <NavIcon>
          <path d="M46 4H12a6 6 0 0 0-6 6v42a5 5 0 0 0 5 5h42a5 5 0 0 0 5-5V18" />
          <path d="M24 38l2-8L50 8l5 5-22 21zM52 6l4-4 3 4-3 5z" fill={c.grey} stroke="none" />
        </NavIcon>
        发帖
      </NavItem>
      <NavItem>
        <NavIcon>
          <rect x="8.500" y="4.500" width="21" height="22" rx="4" />
          <rect x="8.500" y="33" width="21" height="22" rx="4" />
          <rect x="35.500" y="33" width="21" height="22" rx="4" />
          <rect x="38" y="6" width="18" height="18" rx="3" transform="rotate(45 47 15)" />
        </NavIcon>
        功能
      </NavItem>
      <NavItem>
        <NavIcon>
          <circle cx="33" cy="30" r="27" />
          <g fill={c.grey} stroke="none">
            <circle cx="22" cy="30" r="2.900" />
            <circle cx="33" cy="30" r="2.900" />
            <circle cx="44" cy="30" r="2.900" />
          </g>
        </NavIcon>
        设自选
      </NavItem>
    </BottomBar>
    <HomeArea>
      <HomeBar />
    </HomeArea>
  </Page>
);

export default App;
